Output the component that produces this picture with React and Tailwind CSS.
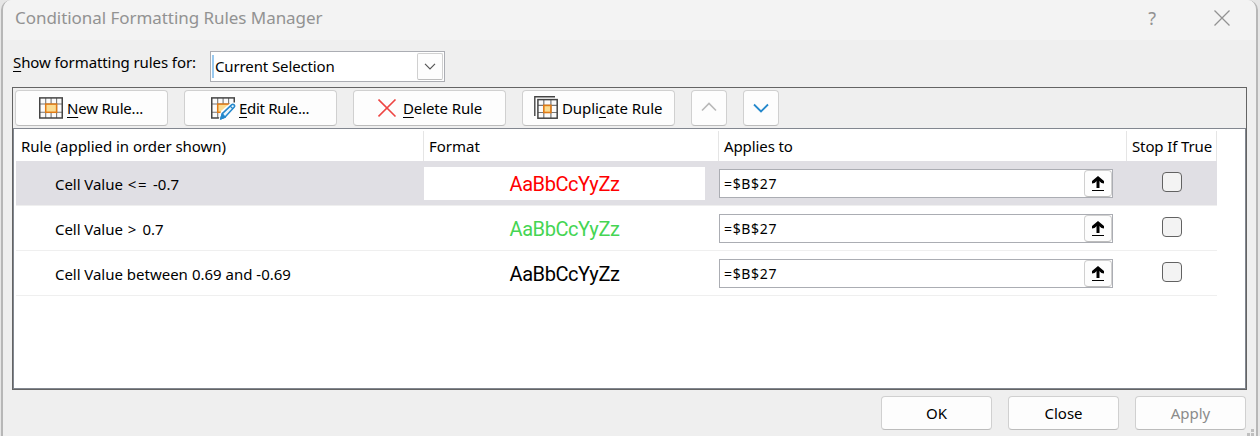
import React from "react";

const rules = [
  { label: "Cell Value", operator: "<=", operand: "-0.7", operatorStyle: "ml-[5px] mr-[5px] tracking-[1.5px]", color: "text-[#ff0000]", selected: true },
  { label: "Cell Value", operator: ">", operand: "0.7", operatorStyle: "ml-[5px] mr-[6px]", color: "text-[#45d553]" },
  { label: "Cell Value", operator: "between", operand: "0.69 and -0.69", operatorStyle: "mx-[4px]", color: "text-black" },
];

function GridIcon({ edit }) {
  return (
    <svg width="26" height="24" viewBox="0 0 26 24" fill="none" className="shrink-0">
      <rect x="1" y="1.5" width="22" height="20.5" fill="#fbfbfb" />
      <path d="M6.7 2v20M17.6 2v20M12.1 2v20M1 8h22M1 16.3h22" stroke="#777" strokeWidth="1.1" />
      <rect x="0.75" y="1.9" width="22.5" height="20.1" stroke="#444" strokeWidth="1.5" />
      <rect x="6.7" y="8.1" width="10.9" height="8.2" fill="#fbdc92" stroke="#e07b16" strokeWidth="1.5" />
      {edit && (
        <g>
          <path d="M7.500 24L10 15L20 6.500H26V24Z" fill="#fdfdfd" />
          <path d="M9.8 22.800l1.5-5.2L20.500 8.900c.9-.9 1.900-.7 2.600 0 .7.7.8 1.600 0 2.400l-9 9.800z" fill="#e8f4fc" stroke="#2488cc" strokeWidth="1.5" strokeLinejoin="round" />
          <path d="M9.8 22.800l1.500-5.200 2.800 3.500zM19.200 10.100l2.700 2.600" fill="#2488cc" stroke="#2488cc" strokeWidth="1.300" />
        </g>
      )}
    </svg>
  );
}

function DuplicateIcon() {
  return (
    <svg width="24" height="24" viewBox="0 0 24 24" fill="none" className="shrink-0">
      <path d="M.8 20V.8H21" stroke="#444" strokeWidth="1.4" />
      <rect x="3.9" y="3.6" width="19.3" height="18.6" fill="#fbfbfb" />
      <path d="M9.8 4v18M16.9 4v18M4 9.4h19M4 16.5h19" stroke="#777" strokeWidth="1.2" />
      <rect x="3.9" y="3.6" width="19.3" height="18.6" stroke="#444" strokeWidth="1.5" />
      <rect x="9.8" y="9.4" width="7.1" height="7.1" fill="#fbdc92" stroke="#e07b16" strokeWidth="1.6" />
    </svg>
  );
}

function Button({ className, children }) {
  return (
    <button className={"flex shrink-0 items-center border border-[#d0d0d0] border-b-[#bcbcbc] bg-[#fdfdfd] " + className}>
      {children}
    </button>
  );
}

function Key({ children }) {
  return <span className="underline decoration-1 underline-offset-[3px]">{children}</span>;
}

function RuleRow({ rule }) {
  return (
    <div className={"grid h-[45px] w-[1201px] grid-cols-[408px_295px_408px_90px] border-b border-[#efefef] " + (rule.selected ? "bg-[#e0dfe4]" : "bg-white")}>
      <div className="flex items-center pt-px pl-[39px]">
        <span className="tracking-[-0.05px]">{rule.label}</span>
        <span className={rule.operatorStyle}>{rule.operator}</span>
        <span>{rule.operand}</span>
      </div>
      <div className="pt-[6px]">
        <div className={"flex h-[33px] w-[281px] items-center justify-center bg-white pt-px font-['Roboto',sans-serif] text-[20px] tracking-[-0.45px] " + rule.color}>
          AaBbCcYyZz
        </div>
      </div>
      <div className="pt-[8px]">
        <div className="flex h-[29px] w-[394px] items-center justify-between border border-[#abadb3] bg-white pl-[4px]">
          <span className="pt-px text-[14px] tracking-[0.65px]">=$B$27</span>
          <Button className="h-[27px] w-[28px] justify-center rounded-[4px]">
            <svg width="14" height="16" viewBox="0 0 14 16" fill="none">
              <path d="M1 14.500h12" stroke="#000" strokeWidth="1" />
              <path d="M7 12V2" stroke="#000" strokeWidth="3" />
              <path d="M7 0L13 5V7.500L10.500 7L7 4L3.500 7L1 7.500V5Z" fill="#000" />
            </svg>
          </Button>
        </div>
      </div>
      <div className="pt-[11px] pl-[35px]">
        <div className="h-[20px] w-[20px] rounded-[4px] border border-[#626262] bg-[#f3f3f3]" />
      </div>
    </div>
  );
}

export default function App() {
  return (
    <div className="h-[436px] w-[1260px] overflow-hidden bg-[#e6e6e6] pl-px font-['Noto_Sans',sans-serif] text-[15px] leading-5 whitespace-nowrap text-black">
      <div className="relative h-[446px] w-[1257px] overflow-hidden rounded-t-[10px] border-x-2 border-[#b7b7b7] bg-[#efefef]">
        <header className="flex h-[40px] items-center bg-[#f3f3f3] pb-[4px] pl-[12px] text-[#929292]">
          <h1 className="grow text-[17px] tracking-[-0.05px]">Conditional Formatting Rules Manager</h1>
          <span className="mr-[58px] text-[18px]">?</span>
          <svg width="16" height="16" viewBox="0 0 16 16" className="mr-[26px]">
            <path d="M.5.5l15 15M15.5.5l-15 15" stroke="#929292" strokeWidth="1.3" />
          </svg>
        </header>

        <div className="flex h-[47px] pt-[11px] pl-[10px]">
          <label className="w-[197px] pt-px tracking-[-0.09px]"><Key>S</Key>how formatting rules for:</label>
          <div className="flex h-[31px] w-[235px] items-center border border-[#abadb3] bg-white pl-px">
            <span className="h-[23px] w-[2px] bg-[#99c9ef]" />
            <span className="grow pb-[2px] pl-px tracking-[-0.12px]">Current Selection</span>
            <Button className="mr-px h-[27px] w-[26px] justify-center rounded-[2px] pr-px pb-px">
              <svg width="12" height="7" viewBox="0 0 12 7" fill="none">
                <path d="M1 .8l5 5 5-5" stroke="#555" strokeWidth="1.2" />
              </svg>
            </Button>
          </div>
        </div>

        <main className="ml-[9px] flex h-[303px] w-[1235px] flex-col border border-[#646464]">
          <div className="flex h-[40px] gap-[16px] pt-[2px] pl-[2px]">
            <Button className="h-[36px] w-[153px] rounded-[4px] pl-[23px]">
              <GridIcon />
              <span className="ml-[2px] tracking-[-0.2px]"><Key>N</Key>ew Rule...</span>
            </Button>
            <Button className="h-[36px] w-[153px] rounded-[4px] pl-[26px]">
              <GridIcon edit />
              <span className="ml-[2px] tracking-[-0.3px]"><Key>E</Key>dit Rule...</span>
            </Button>
            <Button className="h-[36px] w-[153px] rounded-[4px] pl-[24px]">
              <svg width="19" height="19" viewBox="0 0 19 19" className="shrink-0">
                <path d="M.5.5l17 17M17.5.5l-17 17" stroke="#ee4543" strokeWidth="1.6" />
              </svg>
              <span className="ml-[6px] tracking-[-0.12px]"><Key>D</Key>elete Rule</span>
            </Button>
            <Button className="h-[36px] w-[153px] rounded-[4px] pl-[11px]">
              <DuplicateIcon />
              <span className="ml-[4px] tracking-[-0.08px]">Dupli<Key>c</Key>ate Rule</span>
            </Button>
            <Button className="h-[36px] w-[36px] justify-center rounded-[4px] pb-[2px]">
              <svg width="16" height="10" viewBox="0 0 16 10" fill="none"><path d="M1 8.5l7-7 7 7" stroke="#b9b9b9" strokeWidth="1.6" /></svg>
            </Button>
            <Button className="h-[36px] w-[36px] justify-center rounded-[4px]">
              <svg width="16" height="10" viewBox="0 0 16 10" fill="none"><path d="M1 1.5l7 7 7-7" stroke="#2488cc" strokeWidth="1.8" /></svg>
            </Button>
          </div>
          <section className="grow border border-[#828790] bg-white pt-[2px] pl-[2px]">
            <div className="grid h-[30px] w-[1201px] grid-cols-[408px_295px_408px_90px]">
              <div className="flex items-center border-r border-[#e5e5e5] pl-[5px] tracking-[-0.04px]">Rule (applied in order shown)</div>
              <div className="flex items-center border-r border-[#e5e5e5] pl-[5px]">Format</div>
              <div className="flex items-center border-r border-[#e5e5e5] pl-[5px] tracking-[-0.1px]">Applies to</div>
              <div className="flex items-center border-r border-[#e5e5e5] pl-[5px] tracking-[-0.12px]">Stop If True</div>
            </div>
            {rules.map((rule) => <RuleRow key={rule.operator} rule={rule} />)}
          </section>
        </main>

        <footer className="flex justify-end gap-[16px] pt-[6px] pr-[10px]">
          <Button className="h-[34px] w-[111px] justify-center rounded-[4px]">OK</Button>
          <Button className="h-[34px] w-[111px] justify-center rounded-[4px]">Close</Button>
          <Button className="h-[34px] w-[111px] justify-center rounded-[4px] text-[#8b8b8b]">Apply</Button>
        </footer>
        <svg width="8" height="8" className="absolute top-[429px] left-[1244px]" fill="#bfbfbf">
          <path d="M4 0h3v3h-3zM0 4h3v3h-3zM4 4h3v3h-3z" />
        </svg>
      </div>
    </div>
  );
}
